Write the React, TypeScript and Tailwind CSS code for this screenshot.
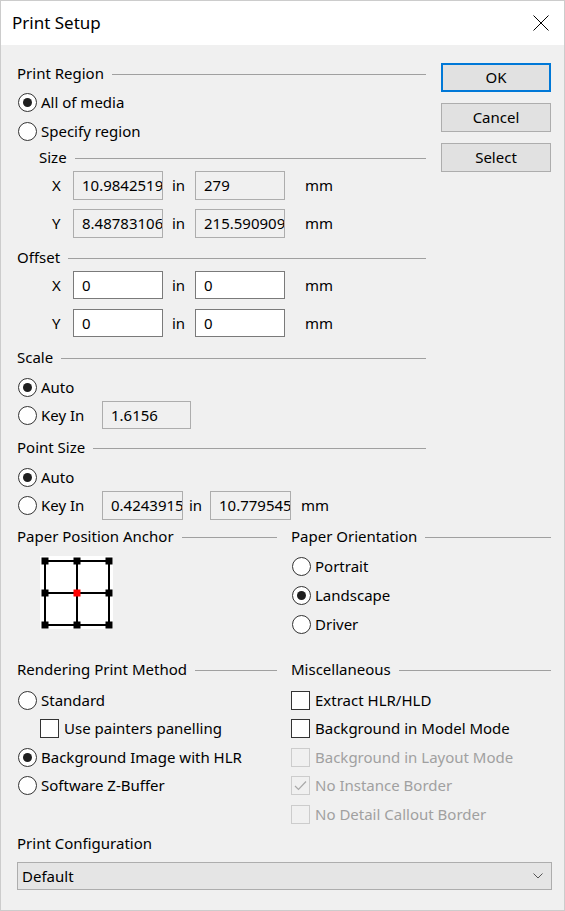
import React from 'react';

const FONT = { fontFamily: '"Noto Sans", "Open Sans", Arial, sans-serif' };

const Header = ({ label, className = '' }: { label: string; className?: string }) => (
  <div className={`flex h-[20px] items-center ${className}`}>
    <span className="whitespace-nowrap">{label}</span>
    <div className="ml-[8px] mt-[2px] h-px flex-1 bg-[#a0a0a0]" />
  </div>
);

const Radio = ({ label, checked = false, className = '' }: { label: string; checked?: boolean; className?: string }) => (
  <div className={`flex h-[24px] items-center ${className}`}>
    <span className="ml-px flex h-[19px] w-[19px] items-center justify-center rounded-full border border-[#333333] bg-white">
      {checked && <span className="h-[9px] w-[9px] rounded-full bg-[#1f1f1f]" />}
    </span>
    <span className="ml-[4px] whitespace-nowrap">{label}</span>
  </div>
);

const Check = ({
  label,
  checked = false,
  disabled = false,
  className = '',
}: {
  label: string;
  checked?: boolean;
  disabled?: boolean;
  className?: string;
}) => (
  <div className={`flex h-[24px] items-center ${className}`}>
    <span
      className={`flex h-[19px] w-[19px] items-center justify-center border ${
        disabled ? 'border-[#cccccc] bg-[#f0f0f0]' : 'border-[#333333] bg-white'
      }`}
    >
      {checked && (
        <svg width="13" height="11" viewBox="0 0 13 11">
          <path d="M1 6 L4.5 9.5 L12 1.5" fill="none" stroke={disabled ? '#a8a8a8' : '#222'} strokeWidth="1.2" />
        </svg>
      )}
    </span>
    <span className={`ml-[5px] whitespace-nowrap ${disabled ? 'text-[#a0a0a0]' : ''}`}>{label}</span>
  </div>
);

const Field = ({ value, w, disabled = false }: { value: string; w: string; disabled?: boolean }) => (
  <div
    className={`flex h-full shrink-0 items-center overflow-hidden whitespace-nowrap border pl-[8px] ${w} ${
      disabled ? 'border-[#adadad] bg-[#f0f0f0]' : 'border-[#7a7a7a] bg-white'
    }`}
  >
    {value}
  </div>
);

const XYRow = ({
  axis,
  a,
  b,
  disabled,
  tall = true,
  className = '',
}: {
  axis: string;
  a: string;
  b: string;
  disabled?: boolean;
  tall?: boolean;
  className?: string;
}) => (
  <div className={`flex items-center ${tall ? 'h-[29px]' : 'h-[28px]'} ${className}`}>
    <span className="w-[56px] pl-[35px]">{axis}</span>
    <Field value={a} w="w-[90px]" disabled={disabled} />
    <span className="w-[32px] pl-[9px]">in</span>
    <Field value={b} w="w-[90px]" disabled={disabled} />
    <span className="ml-[20px]">mm</span>
  </div>
);

const Button = ({ label, primary = false, className = '' }: { label: string; primary?: boolean; className?: string }) => (
  <div
    className={`flex h-[29px] w-[110px] items-center justify-center bg-[#e1e1e1] ${
      primary ? 'border-2 border-[#0078d7]' : 'border border-[#adadad]'
    } ${className}`}
  >
    {label}
  </div>
);

const Anchor = () => (
  <svg width="73" height="73" viewBox="0 0 73 73" className="ml-[23px] mt-[10px] block bg-white">
    {[5, 37, 69].map(p => (
      <g key={p}>
        <line x1={p} y1={4} x2={p} y2={70} stroke="#000" strokeWidth="2" />
        <line x1={4} y1={p} x2={70} y2={p} stroke="#000" strokeWidth="2" />
      </g>
    ))}
    {[5, 37, 69].map(cx =>
      [5, 37, 69].map(cy => (
        <rect
          key={`${cx}-${cy}`}
          x={cx - 3.5}
          y={cy - 3.5}
          width="7"
          height="7"
          fill={cx === 37 && cy === 37 ? '#ff0000' : '#000'}
        />
      ))
    )}
  </svg>
);

export default function App() {
  return (
    <div
      className="flex h-[911px] w-[565px] flex-col border border-[#cccccc] bg-[#f0f0f0] text-[15px] text-black"
      style={FONT}
    >
      {/* title bar */}
      <div className="flex h-[44px] shrink-0 items-center justify-between bg-white pl-[11px] pr-[15px]">
        <span className="text-[17px]">Print Setup</span>
        <svg width="16" height="16" viewBox="0 0 16 16">
          <path d="M0.5 0.5 L15.5 15.5 M15.5 0.5 L0.5 15.5" stroke="#000" strokeWidth="1" />
        </svg>
      </div>

      <div className="flex flex-col pl-[16px] pr-[12px] pt-[18px]">
        <div className="flex gap-[15px]">
          {/* left column */}
          <div className="flex w-[409px] flex-col">
            <Header label="Print Region" />
            <Radio label="All of media" checked className="mt-[7px]" />
            <Radio label="Specify region" className="mt-[5px]" />
            <Header label="Size" className="ml-[22px] mt-[4px]" />
            <XYRow axis="X" a="10.9842519" b="279" disabled className="mt-[4px]" />
            <XYRow axis="Y" a="8.48783106" b="215.590909" disabled className="mt-[9px]" />

            <Header label="Offset" className="mt-[9px]" />
            <XYRow axis="X" a="0" b="0" tall={false} className="mt-[4px]" />
            <XYRow axis="Y" a="0" b="0" tall={false} className="mt-[10px]" />

            <Header label="Scale" className="mt-[10px]" />
            <Radio label="Auto" checked className="mt-[8px]" />
            <div className="mt-[2px] flex h-[28px] items-center">
              <Radio label="Key In" className="w-[85px]" />
              <Field value="1.6156" w="w-[89px]" disabled />
            </div>

            <Header label="Point Size" className="mt-[8px]" />
            <Radio label="Auto" checked className="mt-[8px]" />
            <div className="mt-[2px] flex h-[29px] items-center">
              <Radio label="Key In" className="w-[85px]" />
              <Field value="0.42439153" w="w-[81px]" disabled />
              <span className="w-[27px] pl-[6px]">in</span>
              <Field value="10.7795454" w="w-[81px]" disabled />
              <span className="ml-[10px]">mm</span>
            </div>
          </div>

          {/* buttons */}
          <div className="flex w-[110px] flex-col">
            <Button label="OK" primary />
            <Button label="Cancel" className="mt-[11px]" />
            <Button label="Select" className="mt-[11px]" />
          </div>
        </div>

        <div className="mt-[6px] flex gap-[14px]">
          <div className="flex w-[260px] flex-col">
            <Header label="Paper Position Anchor" />
            <Anchor />
          </div>
          <div className="flex w-[260px] flex-col">
            <Header label="Paper Orientation" />
            <Radio label="Portrait" className="mt-[8px]" />
            <Radio label="Landscape" checked className="mt-[5px]" />
            <Radio label="Driver" className="mt-[5px]" />
          </div>
        </div>

        <div className="mt-[23px] flex gap-[14px]">
          <div className="flex w-[260px] flex-col">
            <Header label="Rendering Print Method" />
            <Radio label="Standard" className="mt-[9px]" />
            <Check label="Use painters panelling" className="ml-[23px] mt-[4px]" />
            <Radio label="Background Image with HLR" checked className="mt-[5px]" />
            <Radio label="Software Z-Buffer" className="mt-[4px]" />
          </div>
          <div className="flex w-[260px] flex-col">
            <Header label="Miscellaneous" />
            <Check label="Extract HLR/HLD" className="mt-[9px]" />
            <Check label="Background in Model Mode" className="mt-[4px]" />
            <Check label="Background in Layout Mode" disabled className="mt-[5px]" />
            <Check label="No Instance Border" checked disabled className="mt-[4px]" />
            <Check label="No Detail Callout Border" disabled className="mt-[5px]" />
          </div>
        </div>

        <div className="mt-[7px] flex h-[20px] items-center">Print Configuration</div>
        <div className="mt-[9px] flex h-[28px] items-center justify-between border border-[#adadad] bg-[#e5e5e5] pl-[4px] pr-[8px]">
          <span>Default</span>
          <svg width="10" height="6" viewBox="0 0 10 6">
            <path d="M0.5 0.5 L5 5 L9.5 0.5" fill="none" stroke="#555" strokeWidth="1" />
          </svg>
        </div>
      </div>
    </div>
  );
}
